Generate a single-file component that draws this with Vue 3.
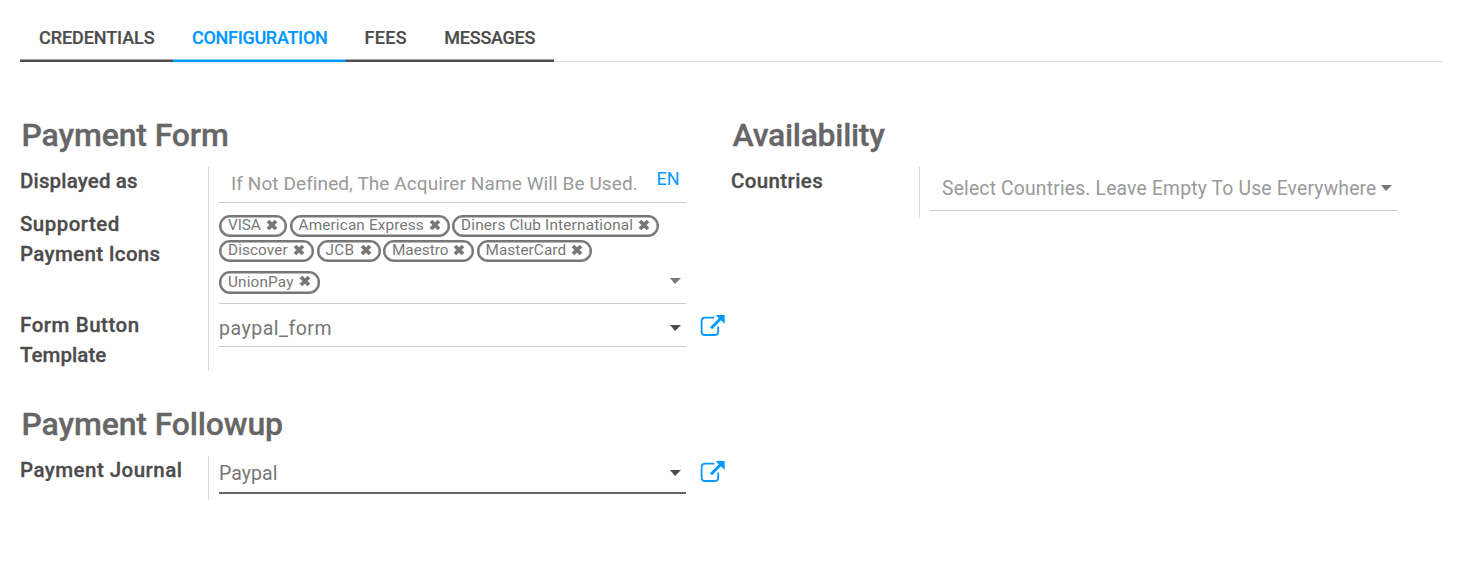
<script setup>
const tabs = [
  { text: 'CREDENTIALS', width: 153, ls: -0.1 },
  { text: 'CONFIGURATION', width: 173, ls: -0.3, active: true },
  { text: 'FEES', width: 79, ls: 0.35 },
  { text: 'MESSAGES', width: 129, ls: -0.25 },
]
const tagRows = [
  [
    { text: 'VISA', width: 68, ls: -0.05 },
    { text: 'American Express', width: 160, ls: 0.16 },
    { text: 'Diners Club International', width: 207, ls: 0.2 },
  ],
  [
    { text: 'Discover', width: 95, ls: 0.1 },
    { text: 'JCB', width: 64, ls: 0.3 },
    { text: 'Maestro', width: 91, ls: 0 },
    { text: 'MasterCard', width: 115, ls: 0.08 },
  ],
  [{ text: 'UnionPay', width: 101, ls: 0.17 }],
]
</script>

<template>
  <main class="sheet">
    <nav class="tabs">
      <a
        v-for="t in tabs"
        :key="t.text"
        class="tab"
        :class="{ active: t.active }"
        :style="{ width: t.width + 'px', letterSpacing: t.ls + 'px' }"
      >{{ t.text }}</a>
    </nav>

    <div class="columns">
      <div class="column">
        <section class="group">
          <h1 class="title t-form">Payment Form</h1>
          <div class="row displayed">
            <label class="label l-displayed">Displayed as</label>
            <div class="cell">
              <div class="field">
                <span class="placeholder ph-name">If Not Defined, The Acquirer Name Will Be Used.</span>
                <span class="lang">EN</span>
              </div>
            </div>
          </div>
          <div class="row icons">
            <label class="label"><span class="l-supported">Supported</span><br><span class="l-icons">Payment Icons</span></label>
            <div class="cell">
              <div class="field tags">
                <div v-for="(r, i) in tagRows" :key="i" class="tag-row">
                  <span v-for="t in r" :key="t.text" class="tag" :style="{ width: t.width + 'px' }">
                    <span class="tag-text" :style="{ letterSpacing: t.ls + 'px' }">{{ t.text }}</span>
                    <svg class="cross" viewBox="0 0 12 12"><path d="M2 2L10 10M10 2L2 10" /></svg>
                  </span>
                  <span v-if="i === 2" class="caret soft"></span>
                </div>
              </div>
            </div>
          </div>
          <div class="row template">
            <label class="label"><span class="l-button">Form Button</span><br><span class="l-template">Template</span></label>
            <div class="cell">
              <div class="field">
                <span class="value v-form">paypal_form</span>
                <span class="caret"></span>
              </div>
              <svg class="external" viewBox="0 0 26 24">
                <path class="box" d="M14.2 3.6H5.2Q1.6 3.6 1.6 7.2V17.4Q1.6 21 5.2 21H14.6Q18.2 21 18.2 17.4V12.6" />
                <path class="shaft" d="M11 14.2L21.2 4" />
                <path class="head" d="M15.6 1H24.7V10.1Z" />
              </svg>
            </div>
          </div>
        </section>

        <section class="group followup">
          <h1 class="title t-followup">Payment Followup</h1>
          <div class="row journal">
            <label class="label l-journal">Payment Journal</label>
            <div class="cell">
              <div class="field focused">
                <span class="value v-paypal">Paypal</span>
                <span class="caret"></span>
              </div>
              <svg class="external" viewBox="0 0 26 24">
                <path class="box" d="M14.2 3.6H5.2Q1.6 3.6 1.6 7.2V17.4Q1.6 21 5.2 21H14.6Q18.2 21 18.2 17.4V12.6" />
                <path class="shaft" d="M11 14.2L21.2 4" />
                <path class="head" d="M15.6 1H24.7V10.1Z" />
              </svg>
            </div>
          </div>
        </section>
      </div>

      <div class="column">
        <section class="group">
          <h1 class="title t-avail">Availability</h1>
          <div class="row countries">
            <label class="label l-countries">Countries</label>
            <div class="cell">
              <div class="field">
                <span class="placeholder ph-countries">Select Countries. Leave Empty To Use Everywhere</span>
                <span class="caret soft"></span>
              </div>
            </div>
          </div>
        </section>
      </div>
    </div>
  </main>
</template>

<style>
body { background: #fff; }
</style>

<style scoped>
.sheet {
  box-sizing: border-box;
  height: 563px;
  padding: 14px 16px 0 20px;
  font-family: Roboto, "Liberation Sans", sans-serif;
  color: #4c4c4c;
}
.tabs {
  display: flex;
  height: 48px;
  box-shadow: inset 0 -1px #dee2e6;
}
.tab {
  box-sizing: border-box;
  height: 48px;
  padding-left: 0.5px;
  border-bottom: 2px solid #4c4c4c;
  box-shadow: inset 0 -1px #a6a6a6;
  font-size: 18px;
  font-weight: 500;
  line-height: 48px;
  text-align: center;
  white-space: nowrap;
  -webkit-text-stroke: 0.2px currentColor;
}
.tab.active {
  color: #0098ff;
  border-color: #0098ff;
  box-shadow: inset 0 -1px #80ccff;
}
.columns { display: flex; padding-top: 53px; }
.column { width: 711px; flex: none; }
.title {
  height: 40px;
  margin: 0;
  padding: 0 0 12px 1.5px;
  font-size: 32px;
  font-weight: 500;
  line-height: 40px;
  color: #666;
  white-space: nowrap;
  -webkit-text-stroke: 0.3px currentColor;
}
.t-form { letter-spacing: -0.15px; }
.t-followup { letter-spacing: -0.15px; }
.t-avail { letter-spacing: -0.3px; }
.row { display: flex; }
.label {
  box-sizing: border-box;
  width: 188px;
  flex: none;
  margin-top: -1px;
  font-size: 20.5px;
  font-weight: 500;
  line-height: 30px;
  white-space: nowrap;
  -webkit-text-stroke: 0.3px currentColor;
}
.l-displayed { letter-spacing: 0.15px; }
.l-supported { letter-spacing: 0.45px; }
.l-icons { letter-spacing: 0.33px; }
.l-button { letter-spacing: 0.55px; }
.l-template { letter-spacing: 0.05px; }
.l-journal { letter-spacing: 0.46px; }
.l-countries { letter-spacing: 0.38px; }
.cell {
  display: flex;
  flex: 1;
  align-items: flex-start;
  border-left: 1px solid #d9d9d9;
  padding-left: 10px;
}
.field {
  box-sizing: border-box;
  display: flex;
  align-items: center;
  width: 467px;
  height: 36px;
  padding-bottom: 2px;
  flex: none;
  border-bottom: 1px solid #ccc;
  white-space: nowrap;
}
.displayed { height: 43px; }
.placeholder { padding-left: 12px; font-size: 19px; color: #999; }
.ph-name { letter-spacing: 0.09px; }
.ph-countries { padding-top: 2px; font-size: 19.3px; letter-spacing: 0.19px; }
.lang {
  align-self: flex-start;
  margin: 0 6.5px 0 auto;
  font-size: 18px;
  line-height: 24px;
  color: #0098ff;
}
.icons { height: 101px; }
.tags {
  flex-direction: column;
  align-items: stretch;
  height: 94px;
  padding: 5px 0 0;
}
.tag-row { display: flex; align-items: center; gap: 2.5px; height: 22px; margin-bottom: 3px; }
.tag-row:nth-child(2) { margin-bottom: 9px; }
.tag {
  box-sizing: border-box;
  display: flex;
  align-items: center;
  flex: none;
  height: 22px;
  padding: 0 7px 0 7px;
  border: 2px solid #777;
  border-radius: 11px;
  box-shadow: inset 0 0 0 0.5px #777;
  font-size: 15.3px;
  line-height: 18px;
  color: #777;
}
.tag-text { margin-top: -2px; }
.cross { width: 12px; height: 12px; margin: -2px 0 0 auto; }
.cross path { fill: none; stroke: #777; stroke-width: 3.8; }
.tag-row:last-child .tag { height: 23px; }
.tag-row:last-child .tag-text { margin-top: -1px; }
.value { padding-top: 2px; font-size: 19.5px; color: #777; }
.v-form { letter-spacing: 0.52px; }
.v-paypal { letter-spacing: 0.05px; }
.caret {
  width: 0;
  margin: 0 5px 0 auto;
  border: 5.5px solid transparent;
  border-top: 6px solid #4c4c4c;
  border-bottom: 0;
  border-right-width: 6px;
  border-left-width: 5px;
}
.caret.soft { border-top-color: #777; }
.tags .caret { margin-top: -3px; }
.template { height: 60px; }
.external { width: 26px; height: 24px; margin: 3px 0 0 14px; }
.box { fill: none; stroke: #0098ff; stroke-width: 1.8; }
.shaft { stroke: #0098ff; stroke-width: 3; }
.head { fill: #0098ff; }
.followup { padding-top: 33px; }
.journal { height: 44px; }
.focused { height: 38px; padding-bottom: 3px; border-bottom: 2px solid #666; }
.journal .external { margin-top: 4px; }
.countries { height: 51px; }
.countries .field { height: 44px; }
</style>
